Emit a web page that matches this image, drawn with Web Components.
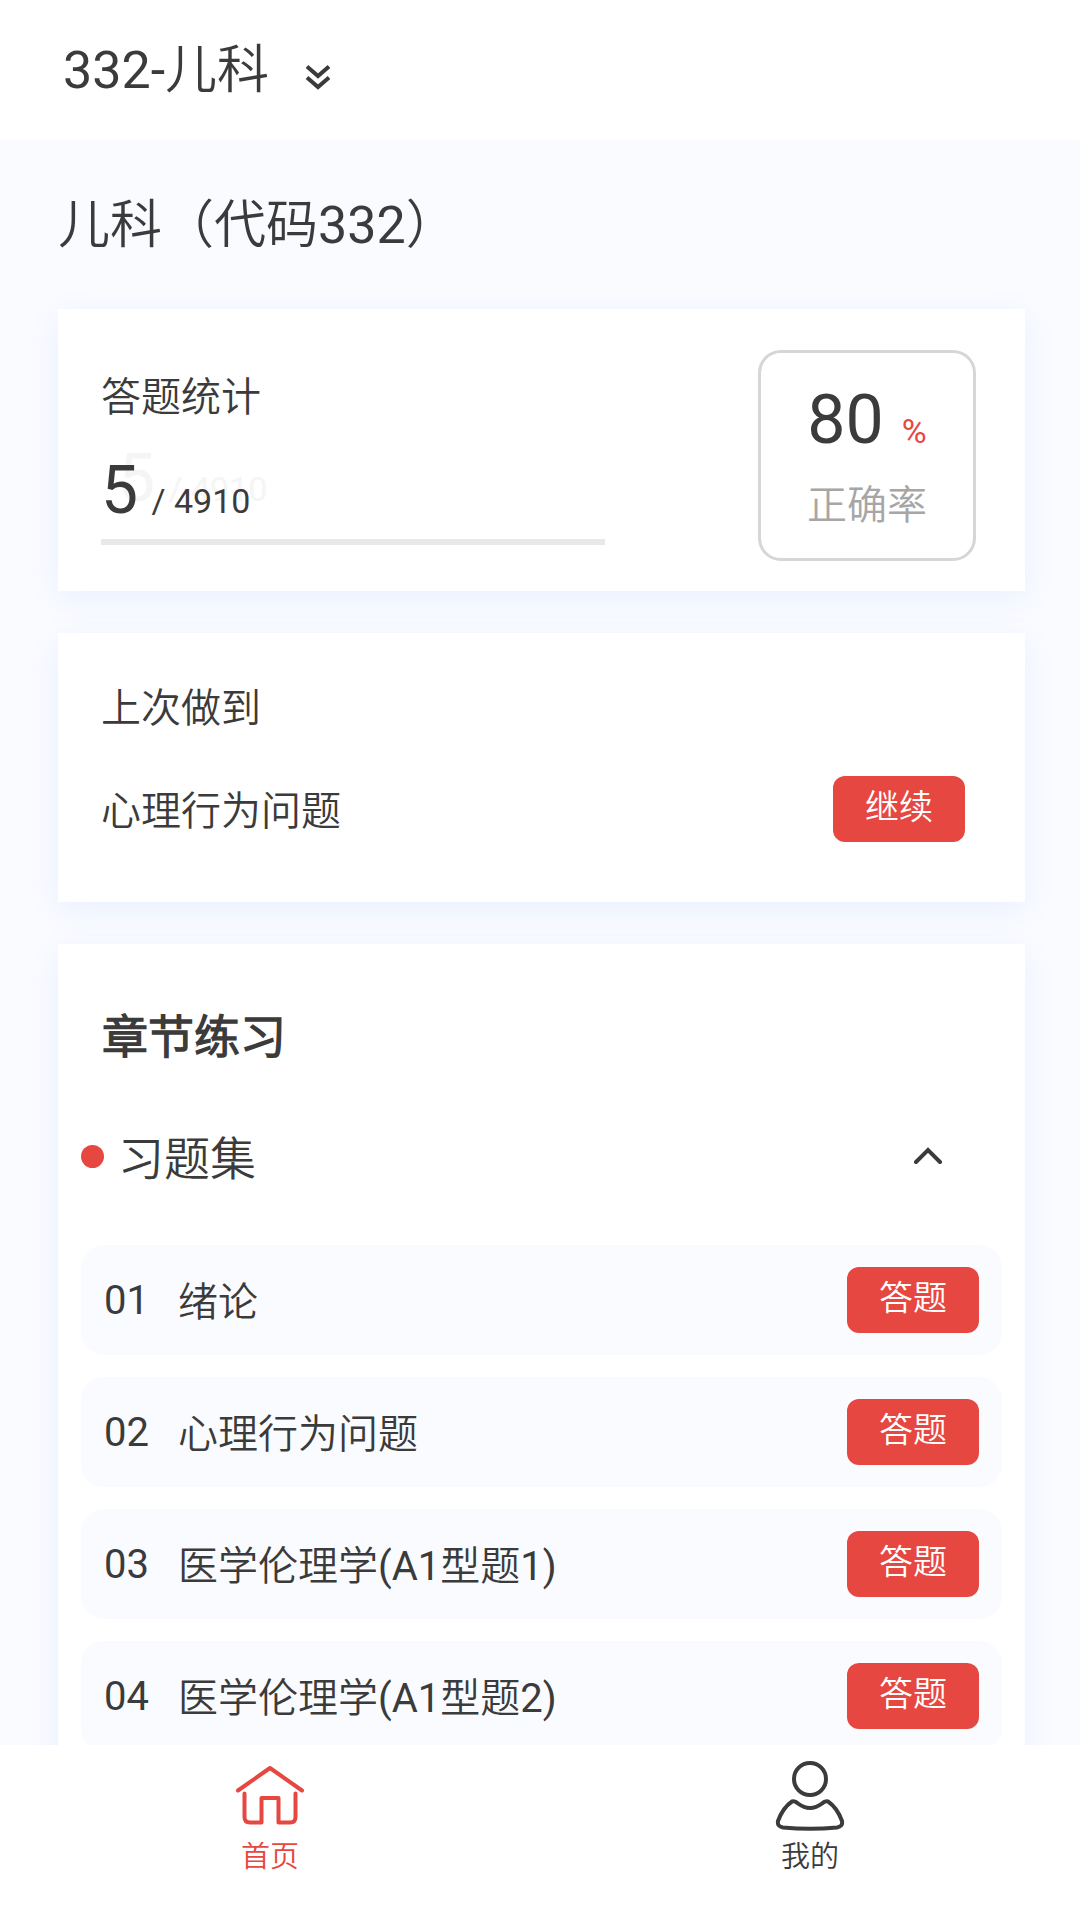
<!DOCTYPE html>
<html lang="zh-CN">
<head>
<meta charset="utf-8">
<meta name="viewport" content="width=device-width, initial-scale=1">
<title>332-儿科</title>
<style>
  :root {
    --ink: #3b3b3b;
    --accent: #e64740;
    --muted: #a6a6a6;
    --tint: #fafbff;
  }
  body {
    margin: 0;
    background: #fff;
    color: var(--ink);
    font-family: Roboto, "Noto Sans CJK SC DemiLight", "Noto Sans CJK SC", sans-serif;
    font-size: 40px;
    line-height: 60px;
  }
</style>
</head>
<body>
<exam-app>
  <subject-bar slot="header">332-儿科</subject-bar>
  <page-title>儿科（代码332）</page-title>
  <stats-card done="5" total="4910" rate="80"></stats-card>
  <resume-card chapter="心理行为问题"></resume-card>
  <chapter-card>
    <span slot="title">章节练习</span>
    <span slot="group">习题集</span>
    <chapter-row number="01">绪论</chapter-row>
    <chapter-row number="02">心理行为问题</chapter-row>
    <chapter-row number="03">医学伦理学(A1型题1)</chapter-row>
    <chapter-row number="04">医学伦理学(A1型题2)</chapter-row>
  </chapter-card>
  <tab-bar slot="footer"></tab-bar>
</exam-app>

<script>
  const define = (name, render) => customElements.define(name, class extends HTMLElement {
    connectedCallback() {
      if (this.shadowRoot) return;
      this.attachShadow({ mode: 'open' }).innerHTML = render(this);
    }
  });

  const cardStyle = `
    :host { display: block; background: #fff; box-shadow: 0 8px 30px rgba(60, 130, 250, .09); }
    h2, p { margin: 0; font-size: 40px; line-height: 60px; font-weight: 400; }
  `;

  define('exam-app', () => `
    <style>
      :host { display: flex; flex-direction: column; height: 100vh; }
      main {
        flex: 1; min-height: 0; box-sizing: border-box; overflow: auto; scrollbar-width: none;
        display: flex; flex-direction: column; gap: 42px;
        padding: 48px 55px 40px 58px; background: var(--tint);
      }
      ::slotted(*) { flex: none; }
    </style>
    <slot name="header"></slot>
    <main><slot></slot></main>
    <slot name="footer"></slot>
  `);

  define('subject-bar', () => `
    <style>
      :host { display: flex; align-items: center; box-sizing: border-box; height: 140px; padding: 2px 63px 0; background: #fff; }
      button {
        display: flex; align-items: center; gap: 35px; padding: 0; border: 0; background: none;
        color: inherit; font: inherit; font-size: 52px; line-height: 76px;
      }
      svg { display: block; margin-top: 12px; }
    </style>
    <button type="button" aria-haspopup="listbox">
      <slot></slot>
      <svg width="28" height="28" viewBox="0 0 28 28" fill="none" stroke="currentColor" stroke-width="4" aria-hidden="true">
        <path d="M3 3.5 14 13 25 3.5M3 14.5 14 24 25 14.5"/>
      </svg>
    </button>
  `);

  define('page-title', () => `
    <style>
      :host { display: block; }
      h1 { margin: 0; font-size: 52px; line-height: 76px; font-weight: 400; padding-bottom: 3px; }
    </style>
    <h1><slot></slot></h1>
  `);

  define('red-button', () => `
    <style>
      :host { display: block; flex: none; }
      button {
        display: block; width: 132px; height: 66px; padding: 0 0 4px; border: 0; border-radius: 12px;
        background: var(--accent); color: #fff; font: inherit; font-size: 34px; line-height: 50px;
      }
    </style>
    <button type="button"><slot></slot></button>
  `);

  define('stats-card', el => {
    const done = el.getAttribute('done'), total = el.getAttribute('total');
    return `
    <style>
      ${cardStyle}
      :host { display: flex; align-items: flex-start; justify-content: space-between; padding: 41px 49px 30px 43px; }
      .progress { width: 504px; padding-top: 18px; }
      .count { position: relative; margin-top: 33px; font-size: 34px; line-height: 60px; white-space: nowrap; }
      .count big { font-size: 66px; margin-right: 5px; }
      .ghost { position: absolute; left: 17px; top: -12px; color: #f5f5f5; }
      .figure { position: relative; }
      .track { height: 6px; margin-top: 8px; background: #e9e9e9; }
      .rate {
        box-sizing: border-box; width: 218px; height: 211px; padding-top: 27px;
        border: 3px solid #d6d6d6; border-radius: 23px; text-align: center;
      }
      .value { font-size: 68px; line-height: 80px; }
      .value small { margin-left: 18px; font-size: 34px; color: var(--accent); }
      .rate p { margin-top: 5px; color: var(--muted); }
    </style>
    <div class="progress">
      <h2>答题统计</h2>
      <div class="count">
        <span class="ghost" aria-hidden="true"><big>${done}</big> / ${total}</span>
        <span class="figure"><big>${done}</big> / ${total}</span>
      </div>
      <div class="track"></div>
    </div>
    <div class="rate">
      <div class="value">${el.getAttribute('rate')}<small>%</small></div>
      <p>正确率</p>
    </div>`;
  });

  define('resume-card', el => `
    <style>
      ${cardStyle}
      :host { padding: 46px 60px 60px 43px; }
      .row { display: flex; align-items: center; justify-content: space-between; margin-top: 37px; }
      .row p { padding-top: 6px; }
    </style>
    <h2>上次做到</h2>
    <div class="row"><p>${el.getAttribute('chapter')}</p><red-button>继续</red-button></div>
  `);

  define('chapter-card', () => `
    <style>
      ${cardStyle}
      :host { padding: 59px 23px 40px; }
      h2 { padding: 0 21px; font-size: 46px; line-height: 68px; font-weight: 700; }
      .group {
        display: flex; align-items: center; width: 100%; height: 68px; margin: 51px 0 55px;
        padding: 0 59px 0 0; border: 0; background: none; color: inherit; font: inherit;
        font-size: 46px; line-height: 68px;
      }
      .dot { width: 23px; height: 23px; margin-right: 14px; border-radius: 50%; background: var(--accent); }
      .label { padding-top: 6px; }
      svg { margin-left: auto; }
      .list { display: flex; flex-direction: column; gap: 22px; }
    </style>
    <h2><slot name="title"></slot></h2>
    <button class="group" type="button" aria-expanded="true">
      <span class="dot"></span><span class="label"><slot name="group"></slot></span>
      <svg width="30" height="20" viewBox="0 0 30 20" fill="none" stroke="currentColor" stroke-width="4" stroke-linecap="round" aria-hidden="true">
        <path d="M3 16 15 4 27 16"/>
      </svg>
    </button>
    <div class="list"><slot></slot></div>
  `);

  define('chapter-row', el => `
    <style>
      :host {
        display: flex; align-items: center; box-sizing: border-box; height: 110px;
        padding: 0 23px; border-radius: 23px; background: var(--tint);
      }
      .number { width: 74px; padding-top: 2px; }
      .name { flex: 1; padding-top: 6px; }
    </style>
    <span class="number">${el.getAttribute('number')}</span>
    <span class="name"><slot></slot></span>
    <red-button>答题</red-button>
  `);

  define('tab-bar', () => `
    <style>
      :host { display: block; background: #fff; }
      nav { display: flex; height: 175px; }
      a {
        flex: 1; display: flex; flex-direction: column; align-items: center; gap: 4px; padding-top: 16px;
        color: inherit; text-decoration: none; font-size: 29px; line-height: 44px;
      }
      a[aria-current] { color: var(--accent); }
      svg { display: block; fill: none; stroke: currentColor; stroke-width: 4; stroke-linecap: round; stroke-linejoin: round; }
    </style>
    <nav>
      <a href="#home" aria-current="page">
        <svg width="70" height="70" viewBox="0 0 70 70" aria-hidden="true">
          <path d="M3 29.500 35 7 67 29.500"/>
          <path d="M9.500 32.500V56q0 5.500 5.500 5.500H26.500V37H43.500V61.500H55q5.500 0 5.500-5.500V32.500"/>
        </svg>
        首页
      </a>
      <a href="#mine">
        <svg width="70" height="70" viewBox="0 0 70 70" stroke-width="5" aria-hidden="true">
          <circle cx="35" cy="18" r="16"/>
          <path d="M17 40.500Q20 39.500 23 42.500Q35 51.500 47 42.500Q50 39.500 53 40.500Q62 46.500 67 60Q68 65.500 62 66.500Q35 69 8 66.500Q2 65.500 3 60Q8 46.500 17 40.500Z"/>
        </svg>
        我的
      </a>
    </nav>
  `);
</script>
</body>
</html>
